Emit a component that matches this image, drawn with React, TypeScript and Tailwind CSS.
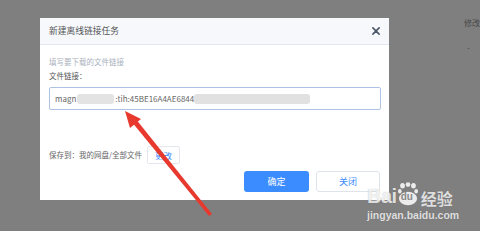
import React from 'react';

const cjk = { fontFamily: '"Noto Sans CJK SC", "Noto Sans", sans-serif' };
const latin = { fontFamily: '"Liberation Sans", sans-serif' };

function RedArrow() {
  return (
    <svg className="absolute left-0 top-0 pointer-events-none" width="480" height="231" viewBox="0 0 480 231">
      <polygon points="212,214 209,216 131,121 135,118" fill="#e8392f" />
      <polygon points="125,111 141,119 130,128" fill="#e8392f" />
    </svg>
  );
}

function Watermark() {
  return (
    <div className="absolute left-[367px] top-[180px] text-white/80 select-none [text-shadow:0_0_1px_rgba(0,0,0,0.3)]">
      <div className="flex items-end h-[26px]">
        <span className="text-[20px] font-bold leading-none tracking-tight" style={latin}>Bai</span>
        <div className="relative w-[20px] h-[24px] ml-[1px]">
          <svg className="absolute left-0 top-0" width="20" height="24" viewBox="0 0 22 26">
            <ellipse cx="5" cy="4" rx="2.6" ry="3" fill="rgba(255,255,255,0.85)" />
            <ellipse cx="11" cy="2.6" rx="2.6" ry="2.6" fill="rgba(255,255,255,0.85)" />
            <ellipse cx="17" cy="4" rx="2.6" ry="3" fill="rgba(255,255,255,0.85)" />
            <ellipse cx="20" cy="10" rx="2" ry="2.4" fill="rgba(255,255,255,0.85)" />
            <ellipse cx="2" cy="10" rx="2" ry="2.4" fill="rgba(255,255,255,0.85)" />
            <ellipse cx="11" cy="18" rx="10" ry="7.5" fill="rgba(255,255,255,0.85)" />
          </svg>
          <span className="absolute left-[3px] top-[10px] text-[10px] font-bold leading-none text-[#8a8a8a] [text-shadow:none]" style={latin}>du</span>
        </div>
        <span className="text-[16px] font-bold leading-none ml-[3px]" style={cjk}>经验</span>
      </div>
      <div className="text-[10.5px] font-bold leading-none mt-[4px]" style={latin}>jingyan.baidu.com</div>
    </div>
  );
}

export default function App() {
  return (
    <div className="relative w-[480px] h-[231px] overflow-hidden bg-[#7f7f7f]" style={cjk}>
      {/* page behind the overlay */}
      <div className="absolute left-[464px] top-[17px] text-[8px] text-[#4a4a4a] whitespace-nowrap">修改</div>
      <div className="absolute left-[467px] top-[42px] text-[8px] text-[#4a4a4a]">-</div>

      <div className="relative ml-[40px] pt-[18px]">
        <div className="w-[349px] h-[182px] bg-white flex flex-col">
          <div className="h-[27px] bg-[#f6f8fc] border-b border-[#e3e8f0] flex items-center justify-between pl-[9px] pr-[9px]">
            <span className="text-[8.75px] text-[#555]">新建离线链接任务</span>
            <svg width="8" height="8" viewBox="0 0 9 9">
              <path d="M1 1 L8 8 M8 1 L1 8" stroke="#4a5568" strokeWidth="1.8" strokeLinecap="round" />
            </svg>
          </div>
          <div className="pl-[9px] pr-[8px] flex flex-col">
            <div className="mt-[11px] text-[7.5px] leading-[11px] text-[#aab1bd]">填写要下载的文件链接</div>
            <div className="mt-[3px] text-[7.5px] leading-[11px] text-[#555]">文件链接：</div>
            <div className="mt-[6px] h-[23px] w-[332px] border border-[#aec2e6] rounded-[2px] flex items-center pl-[5px] text-[8px] text-[#666]">
              <span>magn</span>
              <span className="w-[37px] h-[10px] bg-[#e3e3e3] rounded-[3px] ml-[1px]" />
              <span className="ml-[1px]">:tih:45BE16A4AE6844</span>
              <span className="w-[116px] h-[10px] bg-[#e1e1e1] rounded-[3px]" />
            </div>
            <div className="mt-[36px] flex items-center">
              <span className="text-[7.5px] text-[#666] whitespace-nowrap">保存到：我的网盘/全部文件</span>
              <span className="ml-[5px] w-[33px] h-[18px] border border-[#e4e8ee] rounded-[2px] flex items-center justify-center text-[8.5px] text-[#3b8cff]">更改</span>
            </div>
            <div className="mt-[7px] flex justify-end gap-[7px] pr-[1px]">
              <span className="w-[65px] h-[21px] rounded-[3px] bg-[#3b8cfe] flex items-center justify-center text-[9px] text-white">确定</span>
              <span className="w-[64px] h-[21px] rounded-[3px] bg-white border border-[#dfe4ec] flex items-center justify-center text-[9px] text-[#3b8cff]">关闭</span>
            </div>
          </div>
        </div>
      </div>

      <RedArrow />
      <Watermark />
    </div>
  );
}
